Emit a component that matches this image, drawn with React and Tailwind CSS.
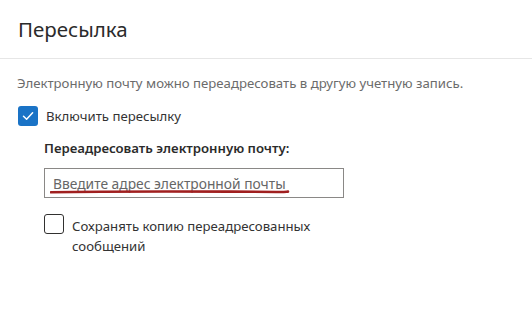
import React, { useState } from "react";

const font = { fontFamily: '"Noto Sans", "Open Sans", sans-serif' };

const Check = ({ checked, onChange }) => (
  <button
    type="button"
    onClick={onChange}
    className={
      "flex h-5 w-5 shrink-0 items-center justify-center rounded-[3px] " +
      (checked ? "bg-[#1a73c6]" : "border border-[#323130] bg-white")
    }
  >
    {checked && (
      <svg width="14" height="14" viewBox="0 0 14 14" fill="none">
        <path d="M2.5 7.3 5.6 10.2 11.6 3.8" stroke="white" strokeWidth="1.5" strokeLinecap="round" strokeLinejoin="round" />
      </svg>
    )}
  </button>
);

const App = () => {
  const [forward, setForward] = useState(true);
  const [keepCopy, setKeepCopy] = useState(false);

  return (
    <div className="h-[311px] w-[532px] overflow-hidden bg-white" style={font}>
      <div className="flex h-[59px] items-center border-b border-[#e6e6e6] px-[18px]">
        <h1 className="text-[20.5px] leading-none text-[#2b2b2b]">Пересылка</h1>
      </div>

      <div className="px-[17px]">
        <p className="mt-[14px] text-[13.2px] leading-5 text-[#6b6b6b]">
          Электронную почту можно переадресовать в другую учетную запись.
        </p>

        <label className="mt-[13px] flex items-center gap-[8px] pl-px">
          <Check checked={forward} onChange={() => setForward(!forward)} />
          <span className="text-[13.2px] leading-5 text-[#333]">Включить пересылку</span>
        </label>

        <div className="pl-[27px]">
          <div className="mt-[12px] text-[13.2px] font-semibold leading-5 text-[#2b2b2b]">
            Переадресовать электронную почту:
          </div>

          <div className="relative mt-[10px] h-[30px] w-[300px] border border-[#8a8886] bg-white">
            <input
              className="h-full w-full bg-transparent px-[8px] text-[13.8px] text-[#323130] outline-none placeholder:text-[#666]"
              placeholder="Введите адрес электронной почты"
            />
            <svg className="pointer-events-none absolute left-[5px] top-[20px]" width="240" height="6" viewBox="0 0 240 6">
              <path d="M1 3.2 C60 2.2 120 2.4 180 2.6 S230 3.4 238 2.6" stroke="#a01f1f" strokeWidth="2.6" fill="none" strokeLinecap="round" />
            </svg>
          </div>

          <label className="mt-[16px] flex items-start gap-[8px]">
            <Check checked={keepCopy} onChange={() => setKeepCopy(!keepCopy)} />
            <span className="mt-[2px] w-[260px] text-[13.2px] leading-5 text-[#333]">
              Сохранять копию переадресованных сообщений
            </span>
          </label>
        </div>
      </div>
    </div>
  );
};

export default App;
